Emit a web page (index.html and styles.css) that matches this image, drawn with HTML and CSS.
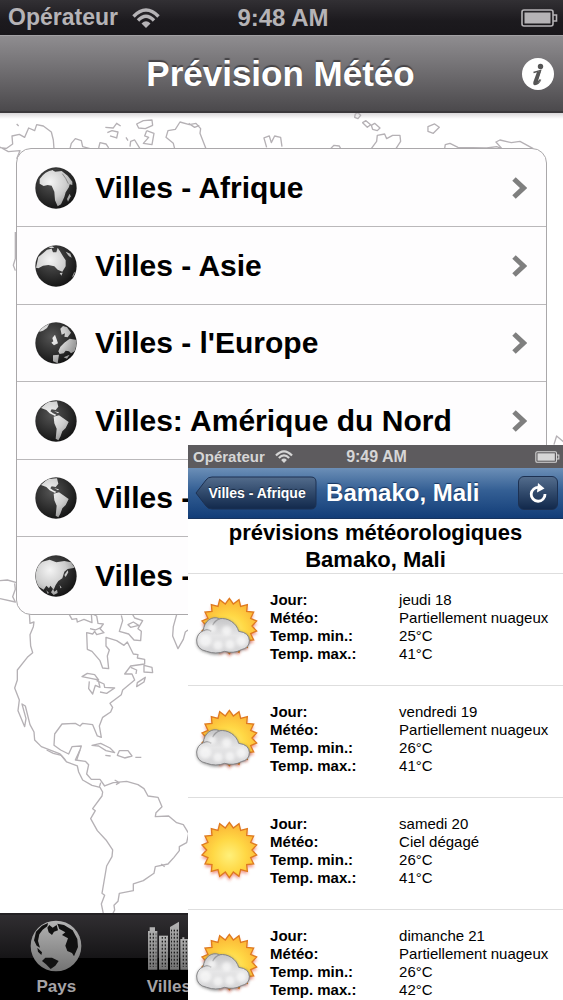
FILE: index.html
```html
<!DOCTYPE html>
<html lang="fr">
<head>
<meta charset="utf-8">
<meta name="viewport" content="width=device-width, initial-scale=1">
<title>Prévision Météo</title>
<link rel="stylesheet" href="styles.css">
</head>
<body>
<svg class="defs" aria-hidden="true">
  <defs>
    <radialGradient id="sea" cx=".4" cy=".35" r=".7"><stop offset="0" stop-color="#555"/><stop offset=".7" stop-color="#262626"/><stop offset="1" stop-color="#111"/></radialGradient>
    <radialGradient id="land" gradientUnits="userSpaceOnUse" cx="45" cy="45" r="80"><stop offset="0" stop-color="#f4f4f4"/><stop offset=".6" stop-color="#cdcdcd"/><stop offset="1" stop-color="#999"/></radialGradient>
    <radialGradient id="sunfill" cx=".5" cy=".6" r=".6"><stop offset="0" stop-color="#fff07a"/><stop offset=".5" stop-color="#ffd845"/><stop offset="1" stop-color="#fbb234"/></radialGradient>
    <linearGradient id="cloudfill" x1="0" y1="0" x2="0" y2="1"><stop offset="0" stop-color="#c4c4c6"/><stop offset=".5" stop-color="#e6e6e7"/><stop offset="1" stop-color="#d4d4d6"/></linearGradient>
    <linearGradient id="tabfill" x1="0" y1="0" x2="0" y2="1"><stop offset="0" stop-color="#b4b4b4"/><stop offset="1" stop-color="#737373"/></linearGradient>
    <filter id="soft" x="-20%" y="-20%" width="140%" height="150%"><feGaussianBlur stdDeviation="5"/></filter>
    <clipPath id="disc"><circle cx="63" cy="63" r="61"/></clipPath>
    <pattern id="windows" x="450" y="0" width="9" height="11" patternUnits="userSpaceOnUse"><rect x="2" y="2" width="4" height="5" fill="#111"/></pattern>

    <symbol id="wifi" viewBox="0 0 28 20">
      <g fill="none" stroke="currentColor" stroke-width="3.4"><path d="M1.500 8.500Q14-4.500 26.500 8.500"/><path d="M6 12.500Q14 4 22 12.500"/></g>
      <path d="M9.500 15.500Q14 11 18.500 15.500L14 20z" fill="currentColor"/>
    </symbol>
    <symbol id="battery" viewBox="0 0 37 18">
      <rect x="1" y="1" width="31" height="16" rx="2" fill="none" stroke="currentColor" stroke-width="1.600"/>
      <rect x="3.500" y="3.500" width="26" height="11" fill="currentColor"/>
      <path d="M32 6h3.500v6H32" fill="none" stroke="currentColor" stroke-width="1.600"/>
    </symbol>
    <symbol id="chevron" viewBox="0 0 15 22"><path d="M2 2l9.500 9L2 20" fill="none" stroke="#7f7f7f" stroke-width="5"/></symbol>

    <symbol id="africa" viewBox="0 0 126 126">
      <circle cx="63" cy="63" r="62" fill="url(#sea)"/>
      <g clip-path="url(#disc)" fill="url(#land)"><path d="M14 36Q30 12 54 9L60 14 80 12 98 26 104 34 112 44 112 54 104 52 102 60 92 76 88 90 78 112 68 118 60 100 58 74 50 56 38 54 26 57 14 50z"/><path d="M96 96l8-16 3 8-8 16z"/></g>
      <path d="M82 20l10 14 8 16" stroke="#666" stroke-width="2" fill="none"/><path d="M54 10l12-4 10 4" stroke="#444" stroke-width="3" fill="none"/>
    </symbol>
    <symbol id="australia" viewBox="0 0 126 126">
      <circle cx="63" cy="63" r="62" fill="url(#sea)"/>
      <g clip-path="url(#disc)" fill="url(#land)"><path d="M3 68L10 36 24 25 36 14 50 11 54 22 64 22 68 8 76 20 84 34 92 46 92 64 82 80 68 74 58 64 40 60 24 62 10 70z"/><path d="M74 84l9-1-4 9zM34 4l16-2 8 6-10 2zM92 20l14 6 4 12-8-4zM112 94l6-14 2 4-6 16z"/></g>
    </symbol>
    <symbol id="europe" viewBox="0 0 126 126">
      <circle cx="63" cy="63" r="62" fill="url(#sea)"/>
      <g clip-path="url(#disc)" fill="url(#land)"><path d="M70 88L76 74 88 62 104 50 126 54 122 86 108 94 102 88 92 86 86 94 74 96z"/><path d="M76 20L84 12 96 16 108 32 98 46 88 44 90 34 80 38z"/><path d="M52 48l8-10 5 14 4 12-12 6-8-8 6-4z"/><path d="M12 30L26 8 44 4 36 18 24 26z"/><path d="M54 100l18-2-4 26-14-6zM86 106l18-8-8 12z"/></g>
    </symbol>
    <symbol id="americas" viewBox="0 0 126 126">
      <circle cx="63" cy="63" r="62" fill="url(#sea)"/>
      <g clip-path="url(#disc)" fill="url(#land)"><path d="M18 24L38 6 66 4 70 20 62 30 50 28 46 34 54 40 64 44 60 48 44 40 34 30z"/><path d="M56 50L72 46 84 54 101 66 92 84 82 94 76 110 70 121 62 116 65 86 58 70z"/><path d="M58 34l14 3-3 3z"/></g>
    </symbol>
    <symbol id="asia" viewBox="0 0 126 126">
      <circle cx="63" cy="63" r="62" fill="url(#sea)"/>
      <g clip-path="url(#disc)" fill="url(#land)"><path d="M0 60L6 34 22 20 44 14 64 22 88 18 108 22 120 38 98 42 88 50 82 70 70 78 62 90 56 104 46 92 42 100 34 92 26 104 16 98 4 92z"/><path d="M88 60l10-14 2 6-8 14zM48 112l6-10 4 8 8-6 2 10-12 6zM34 106l8 8-4 2zM74 90l6 8-4 2z"/></g>
    </symbol>

    <symbol id="sun" viewBox="-106 -90 198 192">
      <g id="sunshape">
        <path d="M0-85L12-67 29-80 34-59 55-65 52-44 74-43 64-23 84-15 68 0 84 15 64 23 74 43 52 44 55 65 34 59 29 80 12 67 0 85-12 67-29 80-34 59-55 65-52 44-74 43-64 23-84 15-68 0-84-15-64-23-74-43-52-44-55-65-34-59-29-80-12-67z" transform="translate(0 8)" fill="#e03a20" opacity=".5" filter="url(#soft)"/>
        <path d="M0-83L12-66 29-79 34-59 54-64 52-44 73-42 64-23 82-15 68 0 82 15 64 23 73 42 52 44 54 64 34 59 29 79 12 66 0 83-12 66-29 79-34 59-54 64-52 44-73 42-64 23-82 15-68 0-82-15-64-23-73-42-52-44-54-64-34-59-29-79-12-66z" fill="url(#sunfill)" stroke="#df7a20" stroke-width="4"/>
      </g>
    </symbol>
    <symbol id="cloudy" viewBox="-106 -90 198 192">
      <use href="#sunshape"/>
      <path d="M-68 80Q-100 72-98 44-96 24-78 16C-76-14-52-30-30-20-4-26 22-8 28 18Q60 20 62 44 62 68 36 74 12 88-14 80-40 92-68 80z" fill="#333" opacity=".5" filter="url(#soft)"/>
      <path d="M-68 76Q-99 70-98 42-96 22-78 14C-76-14-52-32-30-22-4-26 22-8 28 16Q60 20 60 44 60 66 36 71 12 84-14 76-40 86-68 76z" fill="url(#cloudfill)" stroke="#858587" stroke-width="3"/>
      <path d="M-78 15Q-66 6-54 16M-50-2Q-44-16-28-22" fill="none" stroke="#98989a" stroke-width="4"/>
      <g fill="#fff" opacity=".6" filter="url(#soft)"><circle cx="-72" cy="44" r="18"/><circle cx="-34" cy="58" r="14"/><circle cx="2" cy="56" r="14"/><circle cx="36" cy="46" r="15"/><circle cx="-52" cy="6" r="12"/><circle cx="-8" cy="14" r="14"/></g>
    </symbol>
  </defs>
</svg>

<div class="screen">
  <div class="status">
    <span class="carrier">Opérateur <svg class="wifi" aria-hidden="true"><use href="#wifi"/></svg></span>
    <span class="clock">9:48 AM</span>
    <svg class="battery" aria-hidden="true"><use href="#battery"/></svg>
  </div>
  <header class="bar">
    <h1 class="bar-title">Prévision Météo</h1>
    <button class="info" type="button" aria-label="Informations">
      <svg class="info-icon" viewBox="0 0 32 32" aria-hidden="true"><circle cx="16" cy="16" r="16" fill="#fff"/><circle cx="18.500" cy="8.500" r="2.700" fill="#555"/><path d="M11.500 14.500Q15 13.500 18.500 12.500L15 23.500Q15 25 17 23L18.500 21.500" fill="none" stroke="#555" stroke-width="1.500"/><path d="M15 14h3.500l-3.300 10Q16 25.500 19.500 21.500 17 27 13 27.300 10.500 27 11.500 23.500z" fill="#555"/></svg>
    </button>
  </header>

  <main class="content">
    <svg class="map" viewBox="0 113 563 801" preserveAspectRatio="xMidYMin slice" fill="none" stroke="#b5b1b5" stroke-width="4" stroke-linejoin="round" aria-hidden="true">
      <g transform="scale(.3333)">
        <path d="M0 443L20 445 38 432 36 408 58 403 74 412 86 384 104 392 110 374 130 378 154 396 160 420 162 446M0 441L25 455 60 452 50 476M50 372l6 6M210 446L214 430 226 416 244 422 248 440 270 446M296 444L300 428 318 432 326 444M316 382L340 384 350 370 362 378M322 398L336 392 354 396 350 414 330 408M378 412l6 10M420 446L404 420 392 424 390 440M410 372L430 362 456 360 458 376 436 386 416 384zM440 392L434 408 446 412 430 430 456 434 462 400 440 392M524 446L520 430 498 412 504 392 526 388 540 366 568 374 588 370 602 386 600 400 618 446M566 370L584 382 598 376M800 442L792 414 808 408 814 428 824 408 842 412 846 440"/>
        <path d="M1066 342l8-4 8 8-8 10-10-4zM1088 368l10-6 14 12-10 8zM1114 376l10-6 16 14-8 8-14-4zM1284 380l20-8 14 10-18 18-16-6zM1114 446L1130 424 1132 406 1154 402 1160 416 1178 406 1200 406 1202 424 1188 446M992 446l10-10 16 2 4 8M1334 446L1336 434 1350 430 1374 442 1460 444 1490 440 1506 446 1488 426 1500 420 1534 428 1560 424 1600 446"/>
        <path d="M1662 1334l8-26 24 20M46 696v80l-6 20 6 16"/>
      </g>
      <g transform="translate(0 600) scale(.3333)">
        <path d="M0 2L22 0 50 8M0 56L46 66 38 50 46 28 44 10" transform="translate(0 -60)"/>
        <path d="M88 40L90 70 102 66 100 80 90 104 92 138 98 158 82 172 52 210 52 240 44 264 58 300 54 332 74 380 78 356 66 312 76 318 90 374 102 396 104 420 124 440 180 462 196 480M206 40L216 58 230 56 232 66 252 58 276 68 274 40 290 48 294 70 310 72 300 86 312 98 290 104 284 94 278 102 260 98 262 148 276 154 300 182 308 204 326 206 322 168 328 150 318 138 318 112 350 122 372 136 382 126 400 162 414 164 412 174 434 178 434 192 392 198 374 222 396 222 404 240 368 270 364 284 330 310 338 322 332 336 308 352 298 378 304 412 292 408 278 374 248 370 240 378 226 370 186 372 164 402 162 436 182 450 206 462 216 440 244 438 230 480"/>
        <path d="M246 230L262 220 284 224 296 240 276 236zM268 244L266 266 278 282 286 256 300 262 296 246M290 242L312 252 314 262 344 264 320 280 300 276M412 248L436 232 432 246 410 260zM432 196L456 202 458 218 432 216zM392 202L410 210 408 222M276 436L302 430 330 444 344 458 318 452 296 438zM316 466L332 468M352 466L358 452 384 452 396 468 374 474zM406 472L424 472M364 46L368 62 358 94 386 102 402 120 422 122 424 94 414 86 428 62 404 54 396 40M384 74L400 66 416 76 392 82zM530 44L520 80 518 108 534 146 550 118 556 96 564 90M270 86L286 90 304 82"/>
      </g>
      <g transform="translate(0 750) scale(.3333)">
        <path d="M140 0L160 10 184 16 200 36 232 48 236 66 248 90 276 106 300 112 308 126 306 138 278 176 286 182 272 206 292 242 318 270 338 300 336 320 320 348 306 430 314 436 304 462 312 500M240 0L226 30 256 34 266 44 260 72 274 88 300 88 314 108 340 98 380 94 414 104 432 116 444 138 474 142 486 170 468 188 466 200 506 198 530 218 550 224 566 250 560 278 538 290 538 302 522 322 504 342 466 350 462 370 430 392 400 402 400 422 358 430 354 454 342 466 344 480 334 500M344 90L358 98 348 104M302 98L298 112M484 342L494 350"/>
      </g>
    </svg>

    <nav class="regions" aria-label="Régions">
      <a class="region" href="#"><svg class="globe" aria-hidden="true"><use href="#africa"/></svg><span class="region-name">Villes - Afrique</span><svg class="chevron" aria-hidden="true"><use href="#chevron"/></svg></a>
      <a class="region" href="#"><svg class="globe" aria-hidden="true"><use href="#australia"/></svg><span class="region-name">Villes - Asie</span><svg class="chevron" aria-hidden="true"><use href="#chevron"/></svg></a>
      <a class="region" href="#"><svg class="globe" aria-hidden="true"><use href="#europe"/></svg><span class="region-name">Villes - l'Europe</span><svg class="chevron" aria-hidden="true"><use href="#chevron"/></svg></a>
      <a class="region" href="#"><svg class="globe" aria-hidden="true"><use href="#americas"/></svg><span class="region-name">Villes: Amérique du Nord</span><svg class="chevron" aria-hidden="true"><use href="#chevron"/></svg></a>
      <a class="region" href="#"><svg class="globe" aria-hidden="true"><use href="#americas"/></svg><span class="region-name">Villes -</span></a>
      <a class="region" href="#"><svg class="globe" aria-hidden="true"><use href="#asia"/></svg><span class="region-name">Villes -</span></a>
    </nav>
  </main>

  <nav class="tabs" aria-label="Onglets">
    <a class="tab" href="#">
      <svg class="tab-icon" viewBox="94 61 156 156" aria-hidden="true"><circle cx="172" cy="139" r="76" fill="url(#tabfill)"/><path d="M106 122L112 96 130 78 148 70 146 80 132 90 122 104 118 124 124 144 114 138zM146 84L152 76 162 84 174 76 178 92 166 96 160 106 150 98zM116 144L130 158 128 166 118 156zM130 184L140 174 160 174 180 184 170 198 156 208 142 194zM176 72L196 76 222 92 236 118 238 142 226 170 220 160 206 154 200 138 208 116 190 106 200 98 182 88z" fill="#111"/></svg>
      <span>Pays</span>
    </a>
    <a class="tab" href="#">
      <svg class="tab-icon" viewBox="432 61 156 156" aria-hidden="true"><g fill="url(#tabfill)"><path d="M447 210V94h5V83h16v11h7v116z"/><path d="M480 210V108h27v102z"/><path d="M513 210V82l27-16v144z"/><path d="M544 210V118h6v-5h6v5h16v92z"/></g><path d="M450 98h22v104h-22zM483 112h22v90h-22zM516 86h22v116h-22zM549 122h22v80h-22z" fill="url(#windows)"/></svg>
      <span>Villes</span>
    </a>
  </nav>

  <section class="detail" aria-label="Bamako, Mali">
    <div class="status status-small">
      <span class="carrier">Opérateur <svg class="wifi" aria-hidden="true"><use href="#wifi"/></svg></span>
      <span class="clock">9:49 AM</span>
      <svg class="battery" aria-hidden="true"><use href="#battery"/></svg>
    </div>
    <header class="detail-bar">
      <button class="back" type="button">
        <svg class="back-shape" viewBox="0 0 122 34" preserveAspectRatio="none" aria-hidden="true"><defs><linearGradient id="backfill" x1="0" y1="0" x2="0" y2="1"><stop offset="0" stop-color="#536c8c"/><stop offset=".5" stop-color="#30496b"/><stop offset="1" stop-color="#12294c"/></linearGradient></defs><path d="M1 17L11 4Q13 1 17 1H116Q121 1 121 6V28Q121 33 116 33H17Q13 33 11 30z" fill="url(#backfill)" stroke="#1d3152" stroke-width="1"/></svg>
        <span class="back-label">Villes - Afrique</span>
      </button>
      <h2 class="detail-title">Bamako, Mali</h2>
      <button class="refresh" type="button" aria-label="Actualiser">
        <svg class="refresh-icon" viewBox="0 0 20 22" aria-hidden="true"><path d="M11 5.500A6.900 6.900 0 1 0 17 12" fill="none" stroke="#fff" stroke-width="2.800"/><path d="M10 1l6.500 5.500-7.500 4z" fill="#fff"/></svg>
      </button>
    </header>
    <h3 class="forecast-title">prévisions météorologiques<br>Bamako, Mali</h3>
    <article class="day"><svg class="weather" aria-hidden="true"><use href="#cloudy"/></svg><dl class="facts"><dt>Jour:</dt><dd>jeudi 18</dd><dt>Météo:</dt><dd>Partiellement nuageux</dd><dt>Temp. min.:</dt><dd>25°C</dd><dt>Temp. max.:</dt><dd>41°C</dd></dl></article>
    <article class="day"><svg class="weather" aria-hidden="true"><use href="#cloudy"/></svg><dl class="facts"><dt>Jour:</dt><dd>vendredi 19</dd><dt>Météo:</dt><dd>Partiellement nuageux</dd><dt>Temp. min.:</dt><dd>26°C</dd><dt>Temp. max.:</dt><dd>41°C</dd></dl></article>
    <article class="day"><svg class="weather" aria-hidden="true"><use href="#sun"/></svg><dl class="facts"><dt>Jour:</dt><dd>samedi 20</dd><dt>Météo:</dt><dd>Ciel dégagé</dd><dt>Temp. min.:</dt><dd>26°C</dd><dt>Temp. max.:</dt><dd>41°C</dd></dl></article>
    <article class="day"><svg class="weather" aria-hidden="true"><use href="#cloudy"/></svg><dl class="facts"><dt>Jour:</dt><dd>dimanche 21</dd><dt>Météo:</dt><dd>Partiellement nuageux</dd><dt>Temp. min.:</dt><dd>26°C</dd><dt>Temp. max.:</dt><dd>42°C</dd></dl></article>
  </section>
</div>
</body>
</html>
```
FILE: styles.css
```css
* { box-sizing: border-box; }

body {
  margin: 0;
  font-family: "Liberation Sans", Arial, sans-serif;
  font-weight: bold;
  color: #000;
}

a { color: inherit; text-decoration: none; }

button {
  border: 0;
  padding: 0;
  background: none;
  font: inherit;
  color: inherit;
}

.defs { position: absolute; width: 0; height: 0; }

.screen {
  position: relative;
  display: grid;
  grid-template-rows: auto auto 1fr auto;
  min-height: 100vh;
  overflow: hidden;
  background: #fff;
}

/* Status bars */
.status {
  display: grid;
  grid-template-columns: 1fr auto 1fr;
  align-items: center;
  height: 35px;
  padding: 0 5px 0 8px;
  background: linear-gradient(#323034, #1c1a1e 60%, #19171b);
  color: #b5b3b6;
  font-size: 23px;
}

.carrier { display: flex; align-items: center; gap: 14px; }
.clock { font-size: 24px; }
.wifi { width: 28px; height: 20px; }
.battery { width: 37px; height: 18px; justify-self: end; }

.status-small {
  height: 23px;
  padding: 0 3px 0 5px;
  background: #5d5b5e;
  color: #d6d6d6;
  font-size: 15px;
}

.status-small .carrier { gap: 10px; }
.status-small .clock { font-size: 16px; }
.status-small .wifi { width: 18px; height: 13px; }
.status-small .battery { width: 25px; height: 12px; }

/* Main title bar */
.bar {
  display: grid;
  grid-template-columns: 32px 1fr 32px;
  align-items: center;
  height: 78px;
  padding: 0 9px 0 7px;
  border-top: 1px solid #a3a1a4;
  border-bottom: 2px solid #3b393c;
  background: linear-gradient(#8f8d90, #4b494c);
}

.bar-title {
  grid-column: 2;
  margin: 0;
  text-align: center;
  font-size: 35px;
  line-height: 40px;
  color: #fff;
  text-shadow: 0 -2px 1px #454346;
}

.info-icon { display: block; width: 32px; height: 32px; }

/* Region list over the world map */
.content {
  position: relative;
  padding: 35px 16px;
  background: linear-gradient(#dad8da, #fff 6px);
}

.map { position: absolute; inset: 0; width: 100%; height: 100%; }

.regions {
  position: relative;
  display: grid;
  grid-template-rows: repeat(3, 77px 78px);
  border: 1px solid #aaa8aa;
  border-radius: 15px;
  background: #fefdfe;
}

.region {
  display: grid;
  grid-template-columns: 42px 1fr auto;
  align-items: center;
  gap: 18px;
  padding: 0 19px 0 18px;
  font-size: 30px;
  line-height: 34px;
  white-space: nowrap;
}

.region + .region { border-top: 1px solid #bab8ba; }
.globe { width: 42px; height: 42px; }
.chevron { width: 15px; height: 22px; }

/* Tabs */
.tabs {
  display: grid;
  grid-template-columns: repeat(5, 1fr);
  height: 87px;
  border-top: 2px solid #232124;
  background: linear-gradient(#302e31, #161517 50%, #000 50%);
  color: #a5a3a6;
  font-size: 17px;
  line-height: 18px;
}

.tab {
  display: flex;
  flex-direction: column;
  align-items: center;
  gap: 6px;
  padding-top: 5px;
}

.tab-icon { width: 52px; height: 52px; }

/* City forecast window, floating over the lower right corner */
.detail {
  position: absolute;
  top: 445px;
  right: 0;
  bottom: 0;
  width: 66.6%;
  overflow: hidden;
  background: #fff;
}

.detail-bar {
  display: grid;
  grid-template-columns: 122px 1fr 40px;
  align-items: center;
  gap: 9px;
  height: 51px;
  padding: 0 5px 0 7px;
  background: linear-gradient(#6c8fb7, #345f94 45%, #123d78);
  border-bottom: 1px solid #17345f;
  color: #fff;
}

.back {
  position: relative;
  height: 34px;
  padding-left: 2px;
  font-size: 14px;
  white-space: nowrap;
  text-shadow: 0 -1px 1px #14243c;
}

.back-shape { position: absolute; inset: 0; width: 100%; height: 100%; }
.back-label { position: relative; }

.detail-title {
  margin: 0;
  font-size: 24px;
  line-height: 28px;
  white-space: nowrap;
  text-shadow: 0 -1px 1px #16355f;
}

.refresh {
  display: grid;
  place-items: center;
  height: 34px;
  border: 1px solid #1d3152;
  border-radius: 6px;
  background: linear-gradient(#536c8c, #30496b 50%, #12294c);
}

.refresh-icon { width: 20px; height: 22px; }

.forecast-title {
  margin: 0;
  text-align: center;
  font-size: 22px;
  line-height: 27px;
}

.day {
  display: grid;
  grid-template-columns: 66px 1fr;
  gap: 10px;
  padding: 17px 4px 22px 6px;
  border-top: 1px solid #dedede;
  font-size: 15px;
  line-height: 18px;
}

.weather { width: 66px; height: 64px; margin-top: 5px; }

.facts {
  display: grid;
  grid-template-columns: 129px 1fr;
  margin: 0;
  white-space: nowrap;
}

.facts dd { margin: 0; font-weight: normal; }
```
